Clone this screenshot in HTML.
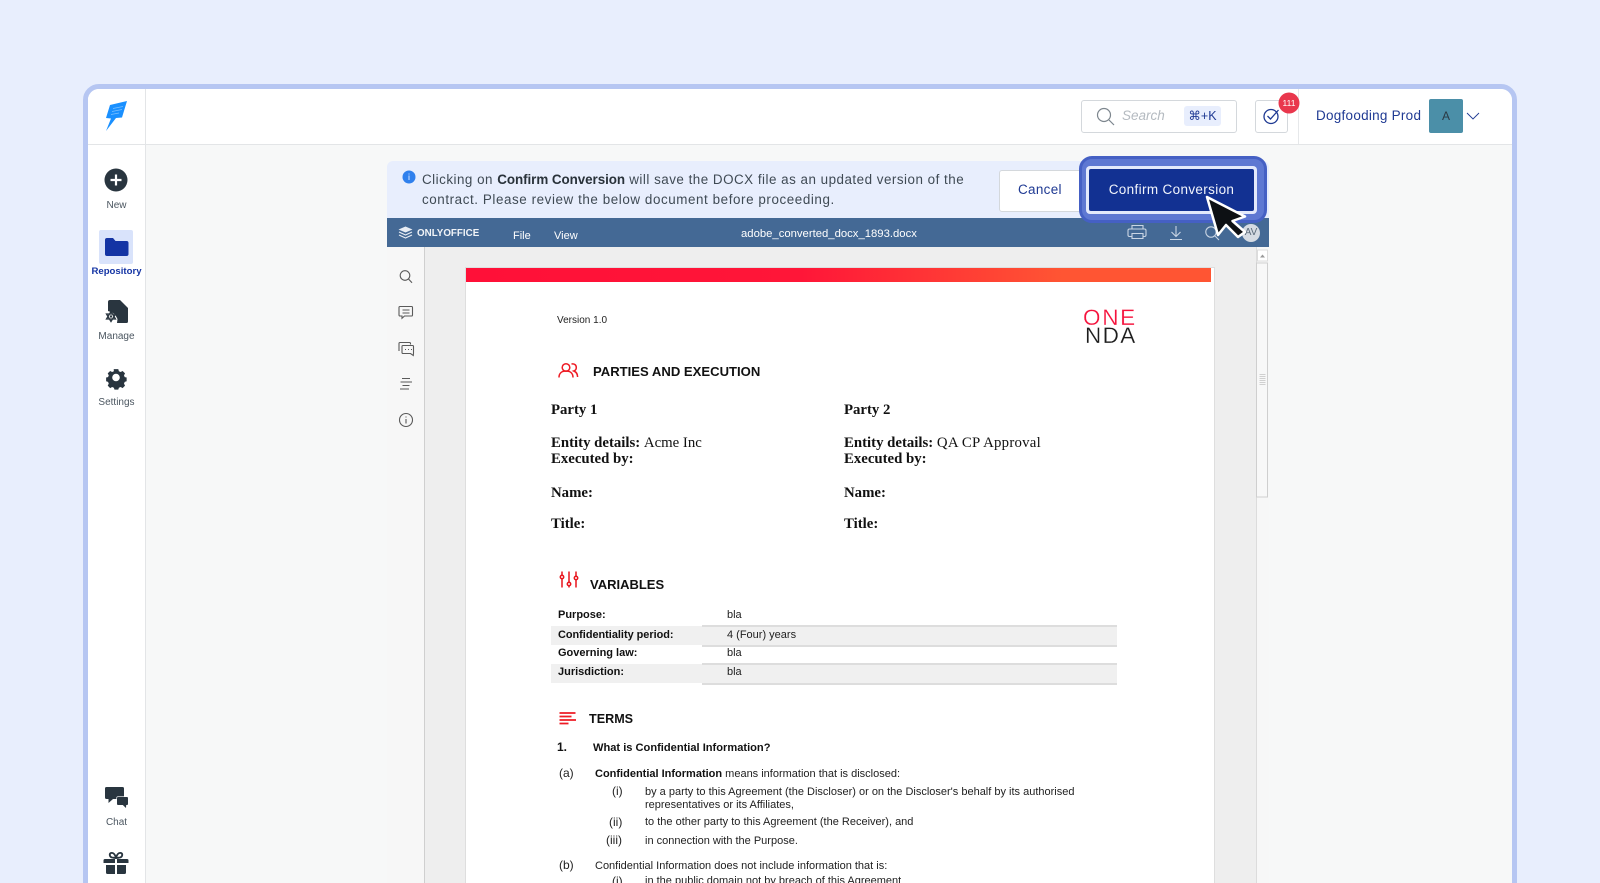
<!DOCTYPE html>
<html lang="en"><head><meta charset="utf-8"><title>Confirm Conversion</title>
<style>
html,body{margin:0;padding:0;width:1600px;height:883px;overflow:hidden;background:#e8eefd}
#w{position:relative;width:1600px;height:883px;overflow:hidden;background:#e8eefd;font-family:"Liberation Sans",sans-serif}
.a{position:absolute;white-space:nowrap}
.lbl{font-size:10px;line-height:12px;color:#4b5660;text-align:center;left:88px;width:57px}
.s{font-family:"Liberation Serif",serif;font-weight:bold;font-size:14.800px;line-height:16px;color:#111}
.s span{font-weight:normal}
.d{font-size:11px;line-height:13px;color:#222}
.b{font-weight:bold;color:#111}
.h{font-weight:bold;font-size:13.100px;line-height:16px;color:#111}
svg{position:absolute;overflow:visible}
</style></head><body><div id="w">
<div class="a" style="left:83px;top:84px;width:1424px;height:830px;border:5px solid #b6c6f2;border-radius:16px;background:#f7f8f8"></div>
<div class="a" style="left:88px;top:89px;width:1424px;height:55px;background:#fff;border-bottom:1px solid #e3e5e7;border-radius:11px 11px 0 0"></div>
<div class="a" style="left:88px;top:89px;width:57px;height:794px;background:#fff;border-right:1px solid #e3e5e7;border-radius:11px 0 0 0"></div>
<div class="a" style="left:88px;top:144px;width:57px;height:1px;background:#e3e5e7"></div>
<div class="a" style="left:1298px;top:89px;width:1px;height:55px;background:#e6e8ea"></div>

<svg style="left:0;top:0" width="1600" height="883">
<polygon points="110,105 127,101 122,117.500 116,118 106,131 111,118.500 106,118" fill="#1a90ff"/>
<path d="M113 108.500l10-2M112 111.500l10-2M111 114.500l8-1.500" stroke="#7cc0ff" stroke-width=".8"/>
<circle cx="116" cy="180" r="11.500" fill="#29353f"/><path d="M116 174.500v11M110.500 180h11" stroke="#fff" stroke-width="2.200"/>
<rect x="99" y="230" width="34" height="34" rx="2" fill="#d9e3fb"/>
<path d="M105 240a2 2 0 0 1 2-2h6l2.500 3h11a2 2 0 0 1 2 2v11a2 2 0 0 1-2 2h-19.500a2 2 0 0 1-2-2z" fill="#1434a4"/>
<path d="M110 300h10l8 8v13.500a1.500 1.500 0 0 1-1.500 1.500H117l.5-4-3-5.500-6.500-2.500V302a2 2 0 0 1 2-2z" fill="#29353f"/>
<path d="M111 311.500l4.500 7.500h-9zM111 321.500l-4.500-7.500h9z" fill="none" stroke="#29353f" stroke-width="1.300"/>
<circle cx="111" cy="316.500" r="1.200" fill="#29353f"/>
<path fill="#29353f" fill-rule="evenodd" d="M113 368h6l.8 2.800 2.300 1 2.600-1.400 3.200 3.200-1.400 2.600 1 2.300 2.500.5v5l-2.500.8-1 2.300 1.400 2.600-3.200 3.200-2.600-1.400-2.300 1-.8 2.500h-5l-.8-2.500-2.300-1-2.600 1.400-3.200-3.200 1.400-2.600-1-2.300-2.500-.8v-5l2.500-.5 1-2.300-1.400-2.600 3.200-3.200 2.600 1.400 2.300-1zM116 374a5 5 0 1 0 0 10 5 5 0 0 0 0-10z" transform="translate(116 377.500) scale(.76) translate(-116 -379)"/>
<path d="M106.500 787h16a1.500 1.500 0 0 1 1.500 1.500v9a1.500 1.500 0 0 1-1.500 1.500H113l-4.500 4v-4h-2a1.500 1.500 0 0 1-1.500-1.500v-9a1.500 1.500 0 0 1 1.500-1.500z" fill="#29353f"/>
<path d="M118 797h9a1 1 0 0 1 1 1v6a1 1 0 0 1-1 1h-.8l-.2 3-3.200-3H118a1 1 0 0 1-1-1v-6a1 1 0 0 1 1-1z" fill="#29353f" stroke="#fff" stroke-width="1.200" paint-order="stroke"/>
<path d="M105 859h22a1.500 1.500 0 0 1 1.500 1.500v2.500h-11.500v-4h-2v4h-11.500v-2.500a1.500 1.500 0 0 1 1.500-1.500zM106 865h9v9h-7.500a1.500 1.500 0 0 1-1.500-1.500zM117 865h9v7.500a1.500 1.500 0 0 1-1.500 1.500H117z" fill="#29353f"/>
<path d="M116 858c-1-4-3-5.500-5-5-2 .7-1.500 4 1 4.500zM116 858c1-4 3-5.500 5-5 2 .7 1.500 4-1 4.500z" fill="none" stroke="#29353f" stroke-width="1.800"/>
</svg>
<div class="a lbl" style="top:200px">New</div>
<div class="a lbl" style="top:265.500px;color:#1434a4;font-weight:bold;font-size:9.600px">Repository</div>
<div class="a lbl" style="top:330.500px">Manage</div>
<div class="a lbl" style="top:396.500px">Settings</div>
<div class="a lbl" style="top:816.500px">Chat</div>

<div class="a" style="left:1081px;top:100px;width:154px;height:31px;border:1px solid #d4d8dc;border-radius:3px;background:#fff"></div>
<svg style="left:0;top:0" width="1600" height="883">
<circle cx="1104" cy="115" r="6.500" fill="none" stroke="#7d868e" stroke-width="1.200"/><path d="M1109 120l5 5" stroke="#7d868e" stroke-width="1.200"/>
</svg>
<div class="a" style="left:1122px;top:108px;font-size:13.500px;line-height:16px;font-style:italic;color:#b4bac0">Search</div>
<div class="a" style="left:1184px;top:106px;width:37px;height:20px;background:#e8eefd;border-radius:3px;text-align:center;font:12.500px/20px 'Liberation Sans','DejaVu Sans',sans-serif;color:#1f3a93">⌘+K</div>
<div class="a" style="left:1255px;top:100px;width:31px;height:31px;border:1px solid #d4d8dc;border-radius:3px;background:#fff"></div>
<svg style="left:0;top:0" width="1600" height="883">
<circle cx="1271" cy="116.500" r="7" fill="none" stroke="#1f3a93" stroke-width="1.300"/>
<path d="M1267.500 116l3 3 8-9" fill="none" stroke="#1f3a93" stroke-width="1.300"/>
<circle cx="1289" cy="103" r="10.500" fill="#e9374d"/>
<path d="M1467 113l6 6 6-6" fill="none" stroke="#1f3a93" stroke-width=".9"/>
</svg>
<div class="a" style="left:1279px;top:97px;width:20px;text-align:center;font-size:8.500px;line-height:12px;color:#fff">111</div>
<div class="a" style="left:1316px;top:108px;font-size:13.500px;line-height:16px;color:#1f3a93;letter-spacing:.26px">Dogfooding Prod</div>
<div class="a" style="left:1429px;top:99px;width:34px;height:34px;background:#4b8fa8;border-radius:2px;text-align:center;font-size:12px;line-height:34px;color:#2b3a44">A</div>

<div class="a" style="left:387px;top:161px;width:882px;height:58px;background:#e8eefd;border-radius:6px 6px 0 0"></div>
<svg style="left:0;top:0" width="1600" height="883"><circle cx="409" cy="177" r="6.500" fill="#2f80ed"/><path d="M409 175.500v4.500M409 173.500v1" stroke="#cfe2ff" stroke-width="1"/></svg>
<div class="a" style="left:422px;top:170px;font-size:13.400px;line-height:20px;color:#3f4a54;letter-spacing:.5px">Clicking on <b style="color:#29323a;letter-spacing:-.05px">Confirm Conversion</b> will save the DOCX file as an updated version of the<br><span style="letter-spacing:.58px">contract. Please review the below document before proceeding.</span></div>
<div class="a" style="left:999px;top:170px;width:90px;height:40px;background:#fff;border:1px solid #d4d8dc;border-radius:3px"></div>
<div class="a" style="left:1018px;top:182px;font-size:13.500px;line-height:16px;color:#1f3a93;letter-spacing:.3px">Cancel</div>

<div class="a" style="left:387px;top:218px;width:882px;height:29px;background:#446995"></div>
<svg style="left:0;top:0" width="1600" height="883">
<path d="M405.500 226.500l7 3-7 3-7-3z" fill="#e8edf4"/><path d="M399 232l6.500 3 6.500-3M399 235l6.500 3 6.500-3" fill="none" stroke="#e8edf4" stroke-width="1.100"/>
</svg>
<div class="a" style="left:417px;top:227px;font-weight:bold;font-size:9.800px;line-height:14px;color:#f1f4f8">ONLYOFFICE</div>
<div class="a" style="left:513px;top:228px;font-size:11px;line-height:16px;color:#fff">File</div>
<div class="a" style="left:554px;top:228px;font-size:11px;line-height:16px;color:#fff">View</div>
<div class="a" style="left:741px;top:226px;font-size:11.300px;line-height:16px;color:#fff">adobe_converted_docx_1893.docx</div>
<svg style="left:0;top:0" width="1600" height="883">
<g fill="none" stroke="#c9d5e4" stroke-width="1.100">
<path d="M1132 229v-3.500h11v3.500M1132 236.500h-2.500a1.500 1.500 0 0 1-1.500-1.500v-4.500a1.500 1.500 0 0 1 1.500-1.500h15a1.500 1.500 0 0 1 1.500 1.500v4.500a1.500 1.500 0 0 1-1.500 1.500h-2M1132 233.500h11v5h-11z"/>
<path d="M1176 226v10M1171.500 232l4.500 4.500 4.500-4.500M1170 239.500h12"/>
<circle cx="1211" cy="232" r="5.200"/><path d="M1215 236l4 4"/>
</g></svg>

<div class="a" style="left:387px;top:247px;width:882px;height:636px;background:#eee"></div>
<div class="a" style="left:387px;top:247px;width:37px;height:636px;background:#f7f7f7;border-right:1px solid #cfcfcf"></div>
<div class="a" style="left:1256px;top:247px;width:13px;height:636px;background:#f7f7f7;border-left:1px solid #dcdcdc;box-sizing:border-box"></div>
<svg style="left:0;top:0" width="1600" height="883">
<g fill="none" stroke="#5a5a5a" stroke-width="1.100">
<circle cx="405" cy="275.500" r="4.800"/><path d="M408.500 279l3.500 3.800"/>
<path d="M400 306.500h11.500a1 1 0 0 1 1 1v7.500a1 1 0 0 1-1 1h-7l-2.500 2.300v-2.300h-2a1 1 0 0 1-1-1v-7.500a1 1 0 0 1 1-1zM402.500 310h7M402.500 313h7"/>
<path d="M399 351v-7.500a1 1 0 0 1 1-1h9.500a1 1 0 0 1 1 1v1M403 345.500h9.500a1 1 0 0 1 1 1v6.500l-.2 2.500-2.800-2h-7.500a1 1 0 0 1-1-1v-6a1 1 0 0 1 1-1zM405 349.500h1M408 349.500h1M411 349.500h1"/>
<path d="M402 378.500h8M400.500 382h11.500M402.500 385.500h7M400 389h9"/>
<circle cx="406" cy="420" r="6.500"/><path d="M406 419v4.500M406 416.500v1"/>
</g>
<rect x="1257.500" y="250" width="10" height="11" fill="#fff" stroke="#dcdcdc"/><path d="M1260 257.500l2.500-3 2.500 3z" fill="#9a9a9a"/>
<rect x="1256.500" y="263" width="11" height="234" fill="#f8f8f8" stroke="#cfcfcf"/>
<path d="M1259.500 374.500h6M1259.500 376.500h6M1259.500 378.500h6M1259.500 380.500h6M1259.500 382.500h6M1259.500 384.500h6" stroke="#d0d0d0"/>
</svg>

<div class="a" style="left:466px;top:268px;width:748px;height:620px;background:#fff;box-shadow:0 0 0 1px #dedede"></div>
<div class="a" style="left:466px;top:268px;width:745px;height:14px;background:linear-gradient(90deg,#ff1038 0%,#ff1638 45%,#ff5533 80%,#ff5533 100%)"></div>

<div class="a" style="left:557px;top:314px;font-size:10px;line-height:14px;color:#222">Version 1.0</div>
<div class="a" style="left:1083px;top:305px;font-size:22.500px;line-height:26px;color:#f5123c;letter-spacing:1.700px;-webkit-text-stroke:.25px #fff">ONE</div>
<div class="a" style="left:1085px;top:323px;font-size:22.500px;line-height:26px;color:#1d1d1d;letter-spacing:1.400px;-webkit-text-stroke:.25px #fff">NDA</div>

<svg style="left:0;top:0" width="1600" height="883">
<g fill="none" stroke="#ee1c25" stroke-width="1.500" transform="translate(-1 0)">
<circle cx="567" cy="367.500" r="3.800"/><path d="M560 377.500c0-4.500 3-6.500 7-6.500s7 2 7 6.500"/>
<path d="M572.500 364c3-.5 4.800 1 4.800 3.500 0 1.700-1 3-2.500 3.500 2 .8 3.800 2.800 3.800 6"/>
</g>
<g fill="none" stroke="#e8141c" stroke-width="1.500">
<path d="M562 571.500v16M569 571.500v16M576 571.500v16"/>
<circle cx="562" cy="577" r="1.700" fill="#fff"/><circle cx="569" cy="584" r="1.700" fill="#fff"/><circle cx="576" cy="578" r="1.700" fill="#fff"/>
</g>
<path d="M559.500 713h16M559.500 716.500h12M559.500 720h16.500M559.500 723.500h9" stroke="#ee1c25" stroke-width="1.800"/>
</svg>

<div class="a h" style="left:593px;top:363.500px">PARTIES AND EXECUTION</div>
<div class="a s" style="left:551px;top:402px">Party 1</div>
<div class="a s" style="left:551px;top:435px">Entity details: <span>Acme Inc</span></div>
<div class="a s" style="left:551px;top:451px">Executed by:</div>
<div class="a s" style="left:551px;top:485px">Name:</div>
<div class="a s" style="left:551px;top:516px">Title:</div>
<div class="a s" style="left:844px;top:402px">Party 2</div>
<div class="a s" style="left:844px;top:435px">Entity details: <span style="letter-spacing:.25px">QA CP Approval</span></div>
<div class="a s" style="left:844px;top:451px">Executed by:</div>
<div class="a s" style="left:844px;top:485px">Name:</div>
<div class="a s" style="left:844px;top:516px">Title:</div>

<div class="a h" style="left:590px;top:577px;font-size:13px">VARIABLES</div>
<div class="a" style="left:551px;top:626px;width:151px;height:19px;background:#f0f0f0"></div>
<div class="a" style="left:551px;top:664px;width:151px;height:19px;background:#f0f0f0"></div>
<div class="a" style="left:702px;top:626px;width:415px;height:19px;background:#f0f0f0"></div>
<div class="a" style="left:702px;top:664px;width:415px;height:19px;background:#f0f0f0"></div>
<div class="a" style="left:702px;top:625px;width:415px;height:1.500px;background:#ddd"></div>
<div class="a" style="left:702px;top:645px;width:415px;height:1.500px;background:#ddd"></div>
<div class="a" style="left:702px;top:663px;width:415px;height:1.500px;background:#ddd"></div>
<div class="a" style="left:702px;top:683px;width:415px;height:1.500px;background:#ddd"></div>
<div class="a d b" style="left:558px;top:609px">Purpose:</div><div class="a d" style="left:727px;top:609px">bla</div>
<div class="a d b" style="left:558px;top:629px;font-size:10.900px">Confidentiality period:</div><div class="a d" style="left:727px;top:629px">4 (Four) years</div>
<div class="a d b" style="left:558px;top:647px">Governing law:</div><div class="a d" style="left:727px;top:647px">bla</div>
<div class="a d b" style="left:558px;top:666px">Jurisdiction:</div><div class="a d" style="left:727px;top:666px">bla</div>

<div class="a h" style="left:589px;top:711px;font-size:12.600px">TERMS</div>
<div class="a d b" style="left:557px;top:740px;font-size:12px;line-height:14px">1.</div>
<div class="a d b" style="left:593px;top:741.500px;font-size:11.100px">What is Confidential Information?</div>
<div class="a d" style="left:559px;top:766px;font-size:12px;line-height:14px">(a)</div>
<div class="a d" style="left:595px;top:768px"><b style="color:#111">Confidential Information</b> means information that is disclosed:</div>
<div class="a d" style="left:612px;top:784px;font-size:12px;line-height:14px">(i)</div>
<div class="a d" style="left:645px;top:786px">by a party to this Agreement (the Discloser) or on the Discloser's behalf by its authorised</div>
<div class="a d" style="left:645px;top:799px">representatives or its Affiliates,</div>
<div class="a d" style="left:609px;top:815px;font-size:12px;line-height:14px">(ii)</div>
<div class="a d" style="left:645px;top:816px">to the other party to this Agreement (the Receiver), and</div>
<div class="a d" style="left:606px;top:833px;font-size:12px;line-height:14px">(iii)</div>
<div class="a d" style="left:645px;top:834.500px">in connection with the Purpose.</div>
<div class="a d" style="left:559px;top:858px;font-size:12px;line-height:14px">(b)</div>
<div class="a d" style="left:595px;top:859.500px">Confidential Information does not include information that is:</div>
<div class="a d" style="left:612px;top:874px;font-size:12px;line-height:14px">(i)</div>
<div class="a d" style="left:645px;top:875px">in the public domain not by breach of this Agreement</div>

<div class="a" style="left:1242px;top:224px;width:18px;height:18px;border-radius:50%;background:#d5dbe3;text-align:center;font-size:10px;line-height:18px;color:#5a6a7a">AV</div>

<div class="a" style="left:1079px;top:156px;width:188px;height:67px;box-sizing:border-box;background:#5e78d2;border:3px solid #4560c4;border-radius:13px"></div>
<div class="a" style="left:1086px;top:166px;width:171px;height:48px;background:#e3e9fb;border-radius:4px"></div>
<div class="a" style="left:1089px;top:169px;width:165px;height:42px;background:#123192;border-radius:2px;text-align:center;font-size:13.500px;line-height:42px;color:#f2f5fc;letter-spacing:.35px">Confirm Conversion</div>

<svg style="left:0;top:0" width="1600" height="883">
<path d="M1207 197L1245 216.500L1232.500 221L1245 232L1238 237L1226 225L1218 235Z" fill="#0d1014" stroke="#fff" stroke-width="2.500" stroke-linejoin="round"/>
</svg>
</div></body></html>
